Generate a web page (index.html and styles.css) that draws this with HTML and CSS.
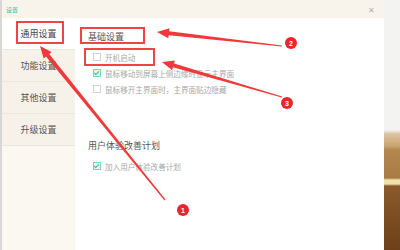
FILE: index.html
```html
<!DOCTYPE html>
<html lang="zh-CN">
<head>
    <meta charset="UTF-8">
    <title>设置</title>
    <link rel="stylesheet" href="styles.css">
</head>
<body>
    <div class="screen">
        <div class="window">
            <div class="titlebar">
                <span class="title">设置</span>
                <span class="close">&#x2715;</span>
            </div>
            <div class="body">
                <!-- Left menu -->
                <div class="sidebar">
                    <div class="menu-item active">通用设置</div>
                    <div class="menu-item">功能设置</div>
                    <div class="menu-item">其他设置</div>
                    <div class="menu-item">升级设置</div>
                </div>

                <!-- Settings -->
                <div class="main">
                    <div class="section-title">基础设置</div>
                    <div class="option first">
                        <span class="check"></span>
                        <span>开机启动</span>
                    </div>
                    <div class="option">
                        <span class="check on"></span>
                        <span>鼠标移动到屏幕上侧边缘时显示主界面</span>
                    </div>
                    <div class="option">
                        <span class="check"></span>
                        <span>鼠标移开主界面时，主界面贴边隐藏</span>
                    </div>

                    <div class="section-title second">用户体验改善计划</div>
                    <div class="option first">
                        <span class="check on"></span>
                        <span>加入用户体验改善计划</span>
                    </div>
                </div>
            </div>
        </div>
        <div class="desk"></div>

        <!-- Annotations drawn over the screenshot -->
        <svg class="marks" width="400" height="250" viewBox="0 0 400 250">
            <g fill="none" stroke="#ef4446" stroke-width="2">
                <rect x="17" y="22" width="46" height="21"/>
                <rect x="81" y="28" width="63" height="15"/>
                <rect x="85" y="49" width="69" height="16"/>
            </g>
            <g fill="#f0393b">
                <polygon points="40,46 51.5,52.1 49.2,54 165.5,199.6 164.5,200.4 46,56.6 43.7,58.5"/>
                <polygon points="157,32 169.5,28.3 169.1,31.3 282.1,45.4 281.9,46.6 168.7,35.3 168.3,38.3"/>
                <polygon points="162,62 174.9,60.6 174.1,63.5 282.2,96.4 281.8,97.6 172.9,67.3 172.1,70.2"/>
            </g>
            <g fill="#e8262b">
                <circle cx="183" cy="210" r="6"/>
                <circle cx="291" cy="43" r="6"/>
                <circle cx="287" cy="103" r="6"/>
            </g>
            <g class="num" fill="#fff" text-anchor="middle">
                <text x="183" y="212.5">1</text>
                <text x="291" y="45.5">2</text>
                <text x="287" y="105.5">3</text>
            </g>
        </svg>
    </div>
</body>
</html>
```

FILE: styles.css
```css
body {
    margin: 0;
    font-family: "Noto Sans CJK SC", "Noto Sans", sans-serif;
    background: #f1f1f1;
}
.screen {
    position: relative;
    width: 400px;
    height: 250px;
    display: flex;
    overflow: hidden;
}
.window {
    width: 382px;
    height: 250px;
    background: #ffffff;
    border-left: 2px solid #d9d7d3;
    box-shadow: 2px 0 3px rgba(0, 0, 0, 0.12);
    display: flex;
    flex-direction: column;
}
.titlebar {
    height: 18px;
    background: #f8f4eb;
    display: flex;
    align-items: center;
    justify-content: space-between;
    padding: 0 9px 0 4px;
}
.title {
    font-size: 6px;
    color: #45b9a2;
}
.close {
    font-size: 8px;
    color: #b0b0b0;
}
.body {
    flex: 1;
    display: flex;
}
.sidebar {
    width: 73px;
    background: #fbf8f2;
}
.menu-item {
    height: 31px;
    line-height: 31px;
    text-align: center;
    font-size: 9px;
    color: #555555;
    background: #f6f2ea;
    border-bottom: 1px solid #ece7dd;
}
.menu-item.active {
    background: #ffffff;
    color: #444444;
}
.main {
    flex: 1;
    padding: 13px 0 0 13px;
}
.section-title {
    font-size: 9px;
    line-height: 12px;
    color: #555555;
}
.section-title.second {
    margin-top: 45px;
}
.option {
    display: flex;
    align-items: center;
    gap: 4px;
    margin: 4px 0 0 5px;
    height: 12px;
    font-size: 7.6px;
    color: #a8a8a8;
}
.option.first {
    margin-top: 8px;
}
.check {
    width: 6px;
    height: 6px;
    border: 1px solid #d2d2d2;
    background: #ffffff;
    position: relative;
}
.check.on {
    border-color: #7fd3bd;
    background: #e3f6f0;
}
.check.on::after {
    content: "";
    position: absolute;
    left: 1px;
    top: 0;
    width: 2px;
    height: 4px;
    border: solid #42bb9c;
    border-width: 0 1px 1px 0;
    transform: rotate(45deg);
}
.desk {
    flex: 1;
    background: linear-gradient(to bottom,
        #f3f3f2 0, #f3f3f2 130px,
        #dcc4a0 134px, #c9a371 146px,
        #b3874f 150px, #a97c45 178px,
        #efe2aa 180px, #efe2aa 184px,
        #8a5a2a 186px, #6e4019 250px);
}
.marks {
    position: absolute;
    left: 0;
    top: 0;
}
.num {
    font-size: 7px;
    font-weight: bold;
    font-family: "Liberation Sans", sans-serif;
}
```
